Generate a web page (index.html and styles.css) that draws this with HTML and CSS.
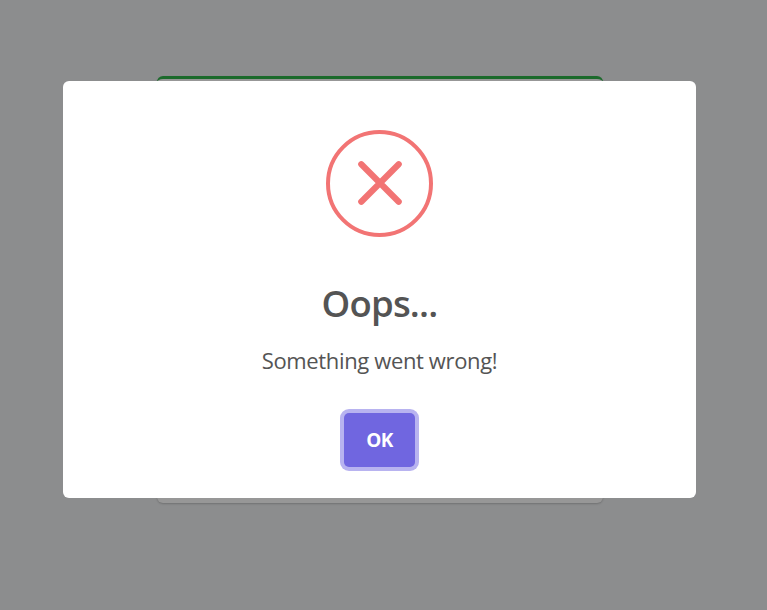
FILE: index.html
```html
<!DOCTYPE html>
<html lang="en">
<head>
<meta charset="utf-8">
<title>Oops...</title>
<link rel="stylesheet" href="styles.css">
</head>
<body>
<main class="page"><div class="card"></div></main>
<div class="overlay">
  <section class="modal" role="dialog" aria-modal="true" aria-labelledby="title">
    <svg class="icon" viewBox="0 0 107 107" aria-hidden="true">
      <circle cx="53.5" cy="53.5" r="51.5" stroke-width="4"/>
      <path d="M35.3 34.3 L72.7 71.7 M72.7 34.3 L35.3 71.7" stroke-width="6.2" stroke-linecap="round"/>
    </svg>
    <h2 class="title" id="title">Oops...</h2>
    <p class="message">Something went wrong!</p>
    <button class="confirm" type="button">OK</button>
  </section>
</div>
</body>
</html>
```
FILE: styles.css
```css
* { box-sizing: border-box; }
body {
  margin: 0;
  height: 610px;
  overflow: hidden;
  background: #8c8d8e;
  font-family: "Segoe UI", "Open Sans", "Noto Sans", sans-serif;
}
.page { padding: 76px 0 0 157px; }
.card {
  width: 446px;
  height: 427px;
  border-top: 3px solid #1b6a2b;
  border-radius: 6px;
  background: #979797;
  box-shadow: 0 1px 2px rgba(0, 0, 0, .2);
}
.overlay {
  position: absolute;
  inset: 0;
  padding: 81px 0 0 63px;
}
.modal {
  display: flex;
  flex-direction: column;
  align-items: center;
  width: 633px;
  height: 417px;
  padding-top: 49px;
  border-radius: 6px;
  background: #fff;
}
.icon {
  width: 107px;
  height: 107px;
  fill: none;
  stroke: #f27474;
}
.title {
  margin: 40px 0 0;
  color: #545454;
  font-size: 36.5px;
  font-weight: 600;
  line-height: 52px;
  letter-spacing: -.8px;
}
.message {
  margin: 15px 0 0;
  color: #545454;
  font-size: 22px;
  line-height: 32px;
  letter-spacing: -.36px;
}
.confirm {
  width: 71px;
  height: 54px;
  margin-top: 37px;
  padding: 0;
  border: 0;
  border-radius: 5px;
  background: #7066e0;
  box-shadow: 0 0 0 4px #b8b3f0;
  color: #fff;
  font: 700 19px/54px "Segoe UI", "Open Sans", "Noto Sans", sans-serif;
  letter-spacing: -.5px;
}
```
